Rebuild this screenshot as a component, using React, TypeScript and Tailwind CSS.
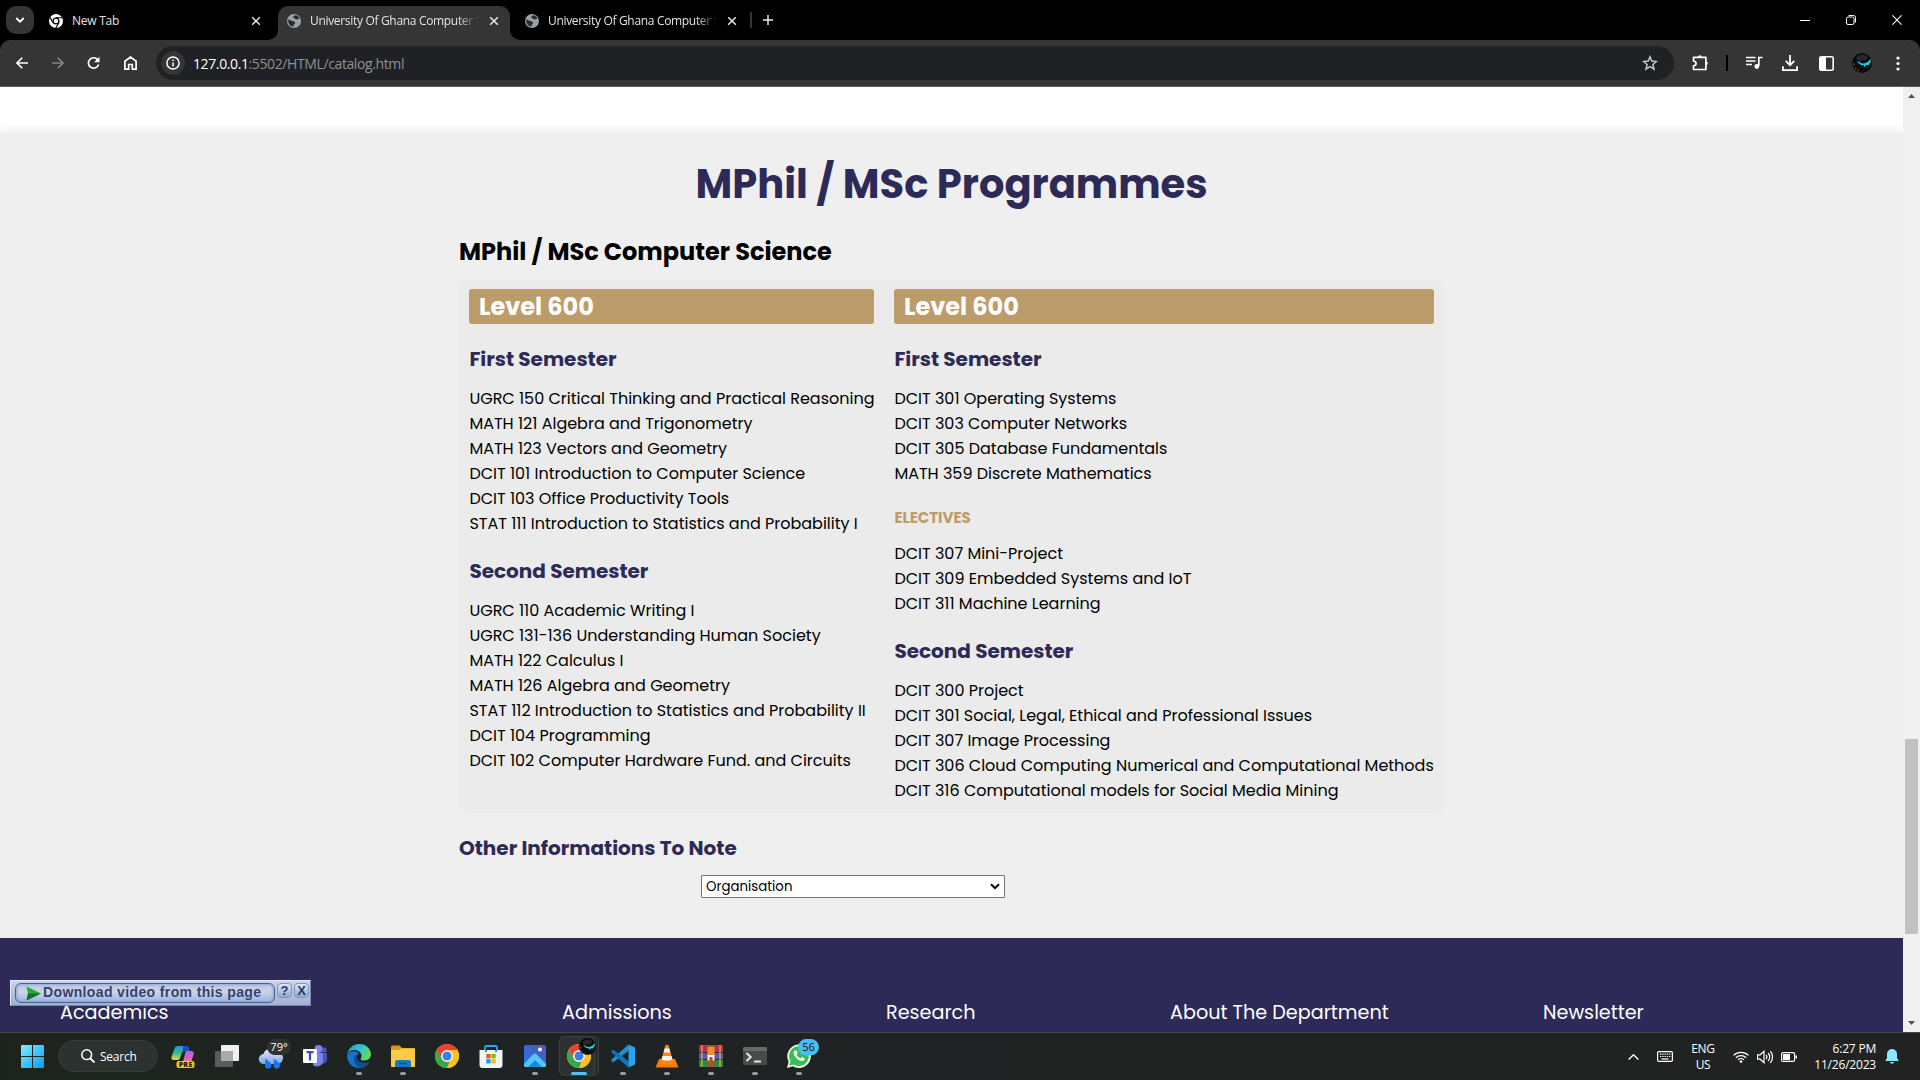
import type { ReactNode } from 'react';

type Block = { kind: 'semester' | 'electives'; title: string; courses: string[] };

const LEFT: Block[] = [
  {
    kind: 'semester',
    title: 'First Semester',
    courses: [
      'UGRC 150 Critical Thinking and Practical Reasoning',
      'MATH 121 Algebra and Trigonometry',
      'MATH 123 Vectors and Geometry',
      'DCIT 101 Introduction to Computer Science',
      'DCIT 103 Office Productivity Tools',
      'STAT 111 Introduction to Statistics and Probability I',
    ],
  },
  {
    kind: 'semester',
    title: 'Second Semester',
    courses: [
      'UGRC 110 Academic Writing I',
      'UGRC 131-136 Understanding Human Society',
      'MATH 122 Calculus I',
      'MATH 126 Algebra and Geometry',
      'STAT 112 Introduction to Statistics and Probability II',
      'DCIT 104 Programming',
      'DCIT 102 Computer Hardware Fund. and Circuits',
    ],
  },
];

const RIGHT: Block[] = [
  {
    kind: 'semester',
    title: 'First Semester',
    courses: [
      'DCIT 301 Operating Systems',
      'DCIT 303 Computer Networks',
      'DCIT 305 Database Fundamentals',
      'MATH 359 Discrete Mathematics',
    ],
  },
  {
    kind: 'electives',
    title: 'ELECTIVES',
    courses: ['DCIT 307 Mini-Project', 'DCIT 309 Embedded Systems and IoT', 'DCIT 311 Machine Learning'],
  },
  {
    kind: 'semester',
    title: 'Second Semester',
    courses: [
      'DCIT 300 Project',
      'DCIT 301 Social, Legal, Ethical and Professional Issues',
      'DCIT 307 Image Processing',
      'DCIT 306 Cloud Computing Numerical and Computational Methods',
      'DCIT 316 Computational models for Social Media Mining',
    ],
  },
];

function Globe() {
  return (
    <svg className="size-3.5 shrink-0" viewBox="0 0 14 14">
      <circle cx="7" cy="7" r="7" fill="#9aa0a6" />
      <path
        d="M1.2 5.6c1.900.1 2.800 1.500 4.300 1.500 1.300 0 1.500 1 2.600 1.200.4 1.300-1 1.600-1.300 2.600-.2.900-.2 1.400-.6 1.800C2.800 12.300.9 9.300 1.200 5.600zM8.200 1.300c-.6.800-2.200.8-2 1.900.2 1 1.400.7 1.900 1.500.5.900 2.300.9 3 .3.600-.5 1.100-.4 1.500-.2C11.900 2.900 10.200 1.500 8.200 1.300z"
        fill="#2b2c2e"
      />
    </svg>
  );
}

function CloseX() {
  return (
    <svg className="ml-auto size-2.5" viewBox="0 0 10 10" fill="none" stroke="#e8eaed" strokeWidth="1.500">
      <path d="M1.200 1.200l7.600 7.600M8.800 1.200L1.200 8.800" />
    </svg>
  );
}

function PageTitle() {
  return (
    <span className="ml-[9px] w-[171px] whitespace-nowrap [mask-image:linear-gradient(to_right,black_148px,transparent_169px)]">
      University Of Ghana Computer S
    </span>
  );
}

function TabStrip() {
  return (
    <div className="flex h-10 shrink-0 items-center bg-black font-['Open_Sans','Noto_Sans',sans-serif] text-[12px] tracking-[-0.32px] text-[#e3e3e3]">
      <div className="ml-1.5 flex size-7 items-center justify-center rounded-[10px] bg-[#353535]">
        <svg className="h-1.5 w-2.5" viewBox="0 0 10 6" fill="none" stroke="#fff" strokeWidth="1.800">
          <path d="M1.200 1l3.800 3.700L8.800 1" />
        </svg>
      </div>
      <div className="ml-[15px] flex w-[212px] items-center pt-px">
        <svg className="size-3.5" viewBox="0 0 14 14">
          <circle cx="7" cy="7" r="7" fill="#fff" />
          <circle cx="7" cy="7" r="2.900" fill="#fff" stroke="#000" strokeWidth="1.200" />
          <path d="M7 3.700h6.300M4.100 8.700L1 3.400M9.900 8.700L6.800 14" stroke="#000" strokeWidth="1.100" />
        </svg>
        <span className="ml-[9px] tracking-[-0.25px]">New Tab</span>
        <CloseX />
      </div>
      <div className="relative ml-[17px] mt-1.5 flex h-[34px] w-[232px] items-center rounded-t-[10px] bg-[#353535] pr-[11px] pb-[5px] pl-[9px]">
        <svg className="absolute bottom-0 -left-2.5 size-2.5" viewBox="0 0 10 10" fill="#353535">
          <path d="M10 0v10H0A10 10 0 0 0 10 0z" />
        </svg>
        <svg className="absolute -right-2.5 bottom-0 size-2.5" viewBox="0 0 10 10" fill="#353535">
          <path d="M0 0v10h10A10 10 0 0 1 0 0z" />
        </svg>
        <Globe />
        <PageTitle />
        <CloseX />
      </div>
      <div className="ml-[15px] flex w-[212px] items-center pt-px">
        <Globe />
        <PageTitle />
        <CloseX />
      </div>
      <div className="ml-[13px] h-4 w-0.5 bg-[#353535]" />
      <svg className="ml-[11px] size-2.5" viewBox="0 0 10 10" stroke="#e8eaed" strokeWidth="1.500">
        <path d="M5 0v10M0 5h10" />
      </svg>
      <div className="mr-[18px] ml-auto flex items-center gap-9">
        <div className="h-px w-[10px] bg-white" />
        <svg className="size-[10px] overflow-visible" viewBox="0 0 10 10" fill="none" stroke="#fff" strokeWidth="1">
          <rect x=".5" y="2" width="7.500" height="7.500" rx="1.500" />
          <path d="M2.500.5h5a2 2 0 0 1 2 2v5" />
        </svg>
        <svg className="size-[10px]" viewBox="0 0 11 11" stroke="#fff" strokeWidth="1.200">
          <path d="M.5.5l10 10M10.500.5l-10 10" />
        </svg>
      </div>
    </div>
  );
}

function Avatar({ className }: { className: string }) {
  return (
    <svg className={className} viewBox="0 0 20 20">
      <circle cx="10" cy="10" r="10" fill="#080c0e" />
      <path d="M4 5c3-4 9-4 12-1l-2 3-8 1z" fill="#23292d" />
      <path
        d="M4.500 8.500l2.500.3c1.500 1.500 3.500 2 5.500 1.500 2.500-.6 4.500-2 6-4.500.5 2 .2 4-1.300 5.200l-.5 1.500-1.500-.8-1.600.8-.6 2-1.300-2.200c-2 .1-4-.6-5-2z"
        fill="#11d6de"
      />
      <path d="M1 10l2 1-1 2z" fill="#c8402e" />
      <path d="M3 15l1.500 1M6 17l1 1" stroke="#b8862e" strokeWidth=".8" />
    </svg>
  );
}

function Toolbar() {
  return (
    <div className="bg-black">
      <div className="flex h-[47px] shrink-0 items-center rounded-t-[10px] border-b border-[#5c5c5c] bg-[#353535] text-white">
        <div className="ml-4 flex items-center gap-6">
          <svg className="h-3 w-3" viewBox="0 0 12 12" fill="none" stroke="#fff" strokeWidth="1.600">
            <path d="M12 6H1.200M6.300.7L1 6l5.300 5.300" />
          </svg>
          <svg className="h-3 w-3" viewBox="0 0 12 12" fill="none" stroke="#858585" strokeWidth="1.600">
            <path d="M0 6h10.800M5.700.7L11 6l-5.300 5.300" />
          </svg>
          <svg className="-ml-px h-3.5 w-[13px]" viewBox="0 0 13 14" fill="none" stroke="#fff" strokeWidth="1.700">
            <path d="M11.600 8.500A5.200 5.200 0 1 1 10.600 3.600" />
            <path d="M12.500 .8v5.400H7.100z" fill="#fff" stroke="none" />
          </svg>
          <svg className="h-3.5 w-[13px]" viewBox="0 0 13 14" fill="none" stroke="#fff" strokeWidth="1.700">
            <path d="M.9 13.100V5.200L6.500 1l5.600 4.200v7.900H8.300V8.500H4.700v4.600z" />
          </svg>
        </div>
        <div className="ml-[19px] flex h-[34px] w-[1518px] items-center rounded-full bg-[#202124] pr-4 pl-[5px]">
          <div className="flex size-6 items-center justify-center rounded-full bg-[#353535]">
            <svg className="size-3.5" viewBox="0 0 14 14" fill="none" stroke="#fff" strokeWidth="1.500">
              <circle cx="7" cy="7" r="6.100" />
              <path d="M7 6.400v4M7 3.600v1.500" />
            </svg>
          </div>
          <span className="ml-2 font-['Open_Sans','Noto_Sans',sans-serif] text-[14px] tracking-[-0.39px] text-[#8d9094]">
            <span className="text-white">127.0.0.1</span>:5502/HTML/catalog.html
          </span>
          <svg className="ml-auto size-4" viewBox="0 0 16 16" fill="none" stroke="#c7c7c7" strokeWidth="1.500">
            <path d="M8 1.800l1.800 4.300 4.600.4-3.500 3 1.100 4.600L8 11.600l-4 2.500 1.100-4.600-3.500-3 4.600-.4z" />
          </svg>
        </div>
        <svg className="-mt-px ml-[18px] size-[17px]" viewBox="0 0 17 17" fill="none" stroke="#fff" strokeWidth="1.700">
          <path d="M1.500 3.300h12.400v12.200H1.500v-3.600c3.400-.6 3.400-4.200 0-4.900z" strokeLinejoin="round" />
          <path d="M6 3a1.800 1.800 0 0 1 3.600 0zM14 7.500a1.800 1.800 0 0 1 0 3.600z" fill="#fff" stroke="none" />
        </svg>
        <div className="ml-[17px] h-4 w-0.5 bg-black" />
        <svg className="ml-[18px] h-[14px] w-[17px]" viewBox="0 0 17 14" fill="none" stroke="#fff" strokeWidth="1.700">
          <path d="M0 1.500h9.500M0 5h9.500M0 8.500h6M16.500 1.500h-3.700v8.500" />
          <circle cx="10.800" cy="10.500" r="2.400" fill="#fff" stroke="none" />
        </svg>
        <svg className="ml-[19px] size-4" viewBox="0 0 16 16" fill="none" stroke="#fff" strokeWidth="1.800">
          <path d="M8 0v10M3.700 5.900L8 10.200l4.300-4.300M.9 11.200v3.900h14.200v-3.900" />
        </svg>
        <svg className="ml-[21px] h-[15px] w-[15px]" viewBox="0 0 15 15">
          <rect x=".8" y=".8" width="13.400" height="13.400" rx="1.500" fill="none" stroke="#fff" strokeWidth="1.600" />
          <path d="M1 1h6v13H1z" fill="#fff" />
        </svg>
        <Avatar className="ml-[18px] size-5" />
        <svg className="ml-[24px] h-[15px] w-1" viewBox="0 0 4 15" fill="#fff">
          <circle cx="2" cy="2" r="1.600" />
          <circle cx="2" cy="7.500" r="1.600" />
          <circle cx="2" cy="13" r="1.600" />
        </svg>
      </div>
    </div>
  );
}

function Level({ blocks }: { blocks: Block[] }) {
  return (
    <div className="whitespace-nowrap">
      <div className="h-[35px] rounded-[3px] bg-[#bc9c6a] px-2.5 text-2xl leading-[36px] font-bold text-white">
        Level 600
      </div>
      {blocks.map((b) => (
        <div key={b.title} className="pl-[0.4px]">
          {b.kind === 'semester' ? (
            <h3 className="mt-5 mb-3 text-xl leading-[30px] font-bold text-[#2d2a57]">{b.title}</h3>
          ) : (
            <h4 className="mt-[21px] mb-3 text-[15px] leading-[22px] font-bold text-[#bc9c6a]">{b.title}</h4>
          )}
          <ul className="text-base leading-[25px] font-normal text-black">
            {b.courses.map((c) => (
              <li key={c}>{c}</li>
            ))}
          </ul>
        </div>
      ))}
    </div>
  );
}

function DownloadBar() {
  return (
    <div className="absolute top-[893px] left-2.5 flex h-[26px] w-[301px] items-start border border-t-[#e4ebf7] border-r-[#6f86ad] border-b-[#6f86ad] border-l-[#e4ebf7] bg-linear-to-b from-[#c9d4ec] to-[#a3b0d0] pt-0.5 pl-1">
      <div className="flex h-5 w-[260px] items-center rounded-[6px] border border-[#4a5f94] bg-linear-to-b from-[#c3cbe2] via-[#cdd3e4] via-45% to-[#9db4e2] pl-2.5 shadow-[inset_0_0_3px_1px_#8fa6d6]">
        <svg className="h-[15px] w-[15px] shrink-0" viewBox="0 0 15 15">
          <path d="M.5.5L15 7.500.5 14.500l1.500-7z" fill="#18b52c" />
          <path d="M2 7.500h13L.5 14.500z" fill="#1c6b34" />
        </svg>
        <span className="ml-0.5 pb-0.5 font-['Liberation_Sans',Arial,sans-serif] text-[14px] font-bold tracking-[0.37px] whitespace-nowrap text-[#2e4374]">
          Download video from this page
        </span>
      </div>
      {['?', 'X'].map((t) => (
        <div
          key={t}
          className="ml-0.5 flex size-[15px] items-center justify-center rounded-[4px] border border-[#8395bd] bg-linear-to-b from-[#dde5f3] to-[#93a7d0] font-['Liberation_Sans',Arial,sans-serif] text-[13px] leading-none font-bold text-[#22386b]"
        >
          {t}
        </div>
      ))}
    </div>
  );
}

function PageView() {
  return (
    <div className="relative flex h-[945px] shrink-0 overflow-hidden bg-white font-['Poppins','Inter',sans-serif]">
      <div className="flex w-[1903px] flex-col pt-[45px]">
        <section className="flex h-[806px] shrink-0 flex-col items-center bg-[#efefef] pt-[22px] shadow-[0_0_10px_rgba(0,0,0,0.1)]">
          <h1 className="text-[40px] leading-[60px] font-bold text-[#2d2a57]">MPhil / MSc Programmes</h1>
          <div className="mt-5 w-[985px]">
            <h2 className="text-2xl leading-9 font-bold text-black">MPhil / MSc Computer Science</h2>
            <div className="mt-[9px] flex h-[534px] gap-5 rounded-[10px] bg-[#ebebeb] p-2.5">
              <div className="w-[405px]">
                <Level blocks={LEFT} />
              </div>
              <div className="w-[540px]">
                <Level blocks={RIGHT} />
              </div>
            </div>
            <h3 className="mt-5 text-xl leading-[30px] font-bold text-[#2d2a57]">Other Informations To Note</h3>
            <div className="mt-3 ml-[242px] flex h-[23px] w-[304px] items-center justify-between rounded-[1px] border border-[#767676] bg-white pr-1 pl-1 text-[13.33px] leading-5 text-black">
              <span>Organisation</span>
              <svg className="h-[7px] w-2.5" viewBox="0 0 10 7" fill="none" stroke="#000" strokeWidth="2">
                <path d="M1 1.200l4 4 4-4" />
              </svg>
            </div>
          </div>
        </section>
        <footer className="flex h-[94px] shrink-0 bg-[#2d2a57] pt-[60px] pl-[60px] text-[19.2px] leading-[29px] whitespace-nowrap text-white">
          <div className="w-[502px]">Academics</div>
          <div className="w-[324px]">Admissions</div>
          <div className="w-[284px]">Research</div>
          <div className="w-[373px]">About The Department</div>
          <div>Newsletter</div>
        </footer>
      </div>
      <div className="flex w-[17px] flex-col items-center bg-[#f0f0f0] py-[7px]">
        <svg className="h-1 w-[7px]" viewBox="0 0 7 4" fill="#505050">
          <path d="M3.500 0L7 4H0z" />
        </svg>
        <div className="mt-[641px] h-[195px] w-[13px] bg-[#c1c1c1]" />
        <svg className="mt-auto h-1 w-[7px]" viewBox="0 0 7 4" fill="#505050">
          <path d="M3.500 4L7 0H0z" />
        </svg>
      </div>
      <DownloadBar />
    </div>
  );
}

function ChromeLogo() {
  return (
    <>
      <circle cx="12" cy="12" r="12" fill="#fcc31e" />
      <path d="M1.600 6A12 12 0 0 1 22.400 6H12a6 6 0 0 0-5.200 9z" fill="#ea4335" />
      <path d="M1.600 6l5.200 9A6 6 0 0 0 12 18l2.500-.4L12 24A12 12 0 0 1 1.600 6z" fill="#34a853" />
      <path d="M22.400 6H12a6 6 0 0 1 5.200 9L12 24A12 12 0 0 0 22.400 6z" fill="#fcc31e" />
      <circle cx="12" cy="12" r="5.800" fill="#fff" />
      <circle cx="12" cy="12" r="4.500" fill="#3b7ded" />
    </>
  );
}

function TaskIcon({ children, open }: { children: ReactNode; open?: boolean }) {
  return (
    <div className="flex w-11 flex-col items-center pt-[11px]">
      <svg className="size-6 overflow-visible" viewBox="0 0 24 24">
        {children}
      </svg>
      {open && <div className="mt-[4px] h-[3px] w-1.5 rounded-full bg-[#9a9a9a]" />}
    </div>
  );
}

function Taskbar() {
  return (
    <div className="flex h-12 shrink-0 border-t border-[#444744] bg-linear-to-r from-[#1d241d] via-[#1f2323] via-20% to-[#222222] font-['Open_Sans','Noto_Sans',sans-serif] text-[12px] text-white">
      <svg className="mt-3 ml-[21px] size-[23px]" viewBox="0 0 23 23">
        <defs>
          <linearGradient id="win" x1="0" y1="0" x2="1" y2="1">
            <stop offset="0" stopColor="#7defff" />
            <stop offset="1" stopColor="#0a9af5" />
          </linearGradient>
        </defs>
        <path
          d="M0 1a1 1 0 0 1 1-1h10v11H0zM12 0h10a1 1 0 0 1 1 1v10H12zM0 12h11v11H1a1 1 0 0 1-1-1zM12 12h11v10a1 1 0 0 1-1 1H12z"
          fill="url(#win)"
        />
      </svg>
      <div className="mt-[7px] ml-3.5 flex h-8 w-[100px] items-center rounded-full border border-[#343b38] bg-[#2b322f] pl-[22px] tracking-[-0.25px]">
        <svg className="size-3.5" viewBox="0 0 14 14" fill="none" stroke="#fff" strokeWidth="1.500">
          <circle cx="5.700" cy="5.700" r="4.900" />
          <path d="M9.300 9.300l4.200 4.200" strokeWidth="1.900" />
        </svg>
        <span className="ml-[5px] pt-px">Search</span>
      </div>
      <div className="ml-[3px] flex">
        <TaskIcon>
          <defs>
            <linearGradient id="cpa" x1="0" y1="0" x2="0" y2="1">
              <stop offset="0" stopColor="#2492e8" />
              <stop offset=".5" stopColor="#35b98e" />
              <stop offset="1" stopColor="#e7d83b" />
            </linearGradient>
            <linearGradient id="cpb" x1="0" y1="0" x2="0" y2="1">
              <stop offset="0" stopColor="#9b6bf2" />
              <stop offset=".5" stopColor="#e35bb0" />
              <stop offset="1" stopColor="#f2935c" />
            </linearGradient>
          </defs>
          <path
            d="M7 2h8c2 0 2.500 1 3 3l.6 2H14c-2 0-3 1-3.500 3L9 14c-.5 1.500-1.500 2-3 2H3c-2.500 0-3-1.500-2.400-3.500L3.500 4.500C4 3 5 2 7 2z"
            fill="url(#cpa)"
          />
          <path d="M12 2h3c2 0 2.500 1 3 3l.6 2H14c-1 0-2 .5-2.500 1.500z" fill="#1b4fc0" />
          <path
            d="M15 7h5c2.500 0 3.300 1.500 2.600 3.700L20.500 17c-.6 2-1.500 3-3.500 3H9c2 0 2.700-1.500 3.200-3L14 10c.4-1.500.6-3 1-3z"
            fill="url(#cpb)"
          />
          <rect x="5.500" y="17" width="18" height="7" rx="2" fill="#fbc50a" />
          <text x="14.600" y="23" fontSize="7" fontWeight="800" textAnchor="middle" fill="#1c1c1c" letterSpacing=".3">
            PRE
          </text>
        </TaskIcon>
        <TaskIcon>
          <rect x="6" y="1" width="18" height="16" rx="1" fill="#f1f1f1" />
          <rect x="0" y="7" width="18" height="16" rx="1" fill="#5b5d5d" />
          <path d="M6 7h12v10H6z" fill="#aaabab" />
        </TaskIcon>
        <TaskIcon>
          <defs>
            <linearGradient id="cl" x1="0" y1="0" x2="0" y2="1">
              <stop offset="0" stopColor="#e6edf8" />
              <stop offset="1" stopColor="#7fa4e6" />
            </linearGradient>
          </defs>
          <path d="M5 20a5 5 0 0 1-.5-10A7 7 0 0 1 17 8a6 6 0 0 1 2 12z" fill="url(#cl)" />
          <path d="M6.500 14.500l5 4.500a3.300 3.300 0 1 1-5.500 2zM15 14.500l5 4.500a3.300 3.300 0 1 1-5.500 2z" fill="#1478f2" />
          <rect x="8" y="-5" width="24" height="16" rx="8" fill="#303230" />
          <text x="20" y="7" fontSize="11" textAnchor="middle" fill="#fff">
            79°
          </text>
        </TaskIcon>
        <TaskIcon>
          <circle cx="21" cy="6" r="2.700" fill="#4b53bc" />
          <circle cx="15.500" cy="5" r="4" fill="#7b83eb" />
          <path d="M17 9h7v6.500a4 4 0 0 1-6 3.400z" fill="#4b53bc" />
          <path d="M10 9h10v8a6 6 0 0 1-10 4z" fill="#7b83eb" />
          <rect x="0" y="5" width="14" height="14" rx="1" fill="#fff" />
          <path d="M3.500 8.200h7M7 8v8.500" stroke="#4049b8" strokeWidth="2.200" />
        </TaskIcon>
        <TaskIcon open>
          <defs>
            <linearGradient id="eg" x1="0" y1="0" x2="1" y2=".4">
              <stop offset="0" stopColor="#249fdd" />
              <stop offset=".6" stopColor="#34c2cf" />
              <stop offset="1" stopColor="#62d95a" />
            </linearGradient>
          </defs>
          <path
            d="M.2 10.500C3 6.500 9 6.200 12 9.500c-1.800 1.200-2.800 3-2.200 5 .8 3.600 5.700 5.500 12 4C19 23 15.500 24 12 24A12 12 0 0 1 .2 10.500z"
            fill="#1574c8"
          />
          <path
            d="M.2 10.500C1.500 4 6.500 0 12 0c7 0 12 5 12 10.300 0 3.800-3 6.200-6.700 6.200-2.800 0-4.300-1.200-3.300-2.600C16 10.500 12.500 6 7.500 6 3.800 6 1 8 .2 10.500z"
            fill="url(#eg)"
          />
          <path
            d="M8.800 10.500c-3.600 4.500-1.500 11.800 4.700 13.400 3.800-.2 7-2.300 8.500-5.400-5 1.800-10.800.3-12-3.800-.4-1.500-.2-2.800.5-3.900z"
            fill="#0d4f97"
          />
        </TaskIcon>
        <TaskIcon open>
          <path d="M0 3a1.500 1.500 0 0 1 1.500-1.500h7L11 4h11.500A1.500 1.500 0 0 1 24 5.500V8H0z" fill="#dd9a0c" />
          <path d="M0 6h8.500l2-1.500H24V22a1 1 0 0 1-1 1H1a1 1 0 0 1-1-1z" fill="#fccb45" />
          <path d="M4 23v-4.500A2.500 2.500 0 0 1 6.500 16h11a2.500 2.500 0 0 1 2.500 2.500V23z" fill="#1478c6" />
          <path d="M8 19.500h8" stroke="#0a5596" strokeWidth="1.500" />
        </TaskIcon>
        <TaskIcon>
          <ChromeLogo />
        </TaskIcon>
        <TaskIcon>
          <path
            d="M6 7V3.500A1.500 1.500 0 0 1 7.500 2h9A1.500 1.500 0 0 1 18 3.500V7"
            fill="none"
            stroke="#28a8ea"
            strokeWidth="1.800"
          />
          <path d="M.5 6h23v15a3 3 0 0 1-3 3h-17a3 3 0 0 1-3-3z" fill="#f1f3f5" />
          <path d="M6 6h1.800v2H6zM16.200 6H18v2h-1.800z" fill="#1c86c8" />
          <path d="M7.300 10h4.300v4.300H7.300z" fill="#f25022" />
          <path d="M12.400 10h4.300v4.300h-4.300z" fill="#7fba00" />
          <path d="M7.300 15.100h4.300v4.300H7.300z" fill="#00a4ef" />
          <path d="M12.400 15.100h4.300v4.300h-4.300z" fill="#ffb900" />
        </TaskIcon>
        <TaskIcon open>
          <defs>
            <linearGradient id="ph" x1="0" y1="1" x2="1" y2="0">
              <stop offset="0" stopColor="#1d7fe0" />
              <stop offset="1" stopColor="#5a4fb8" />
            </linearGradient>
          </defs>
          <rect x="1" y="1" width="22" height="22" rx="2" fill="url(#ph)" />
          <path
            d="M1 20l9-9.500c1.200-1.200 2.600-1.200 3.800 0L23 20v1.500a1.500 1.500 0 0 1-1.500 1.500h-19A1.500 1.500 0 0 1 1 21.500z"
            fill="#53c6f7"
          />
          <path d="M5 23l7-7 7 7z" fill="#1e88dd" />
          <circle cx="17" cy="5.500" r="2" fill="#fff" />
        </TaskIcon>
        <div className="relative flex w-11 flex-col items-center pt-[11px]">
          <div className="absolute top-[3px] left-[2px] h-10 w-[40px] rounded-[5px] border border-[#3b3e3e] bg-[#2a2d2d]" />
          <div className="absolute top-[3px] left-[2px] h-10 w-[36px] rounded-[5px] border border-[#3b3e3e] bg-[#2e3131]" />
          <svg className="relative size-6 overflow-visible" viewBox="0 0 24 24">
            <ChromeLogo />
          </svg>
          <Avatar className="absolute top-[5px] left-[22px] size-[17px]" />
          <div className="relative mt-[4px] h-[3px] w-4 rounded-full bg-[#4cc2ff]" />
        </div>
        <TaskIcon open>
          <path d="M17.500.5L0 16l2 2.500L18 6.500z" fill="#1f8fd8" />
          <path d="M17.500 23.500L0 8l2-2.500 16 12z" fill="#0f74bd" />
          <path d="M17.500.5L24 3.500v17l-6.500 3z" fill="#29a3ec" />
        </TaskIcon>
        <TaskIcon open>
          <path d="M4 15h16l3.500 8.500H.5z" fill="#f57c00" />
          <path d="M10.500 1h3L18.500 19c-2 2-11 2-13 0z" fill="#fa8a16" />
          <path d="M9.700 4.500h4.600l1 4H8.700zM7.500 12h9l1 3.500c-3 1.500-8 1.500-11 0z" fill="#f4f4f4" />
        </TaskIcon>
        <TaskIcon open>
          <rect x="0" y="1" width="24" height="7.500" rx="1" fill="#c22a4e" />
          <rect x="0" y="8.500" width="24" height="7" rx="1" fill="#5b57b5" />
          <rect x="0" y="15.500" width="24" height="7.500" rx="1" fill="#2b8a3c" />
          <path d="M0 8.500h24M0 15.500h24" stroke="#24222c" strokeWidth=".8" />
          <path d="M3 1v22M21 1v22" stroke="#e0b640" strokeWidth="1.200" />
          <path d="M8.500 1h7v22h-7z" fill="#a5562a" />
          <path d="M8.500 3h7v9h-7z" fill="#e8962c" />
          <path d="M9.500 16.500v-4.500h5v4.500" fill="none" stroke="#fff" strokeWidth="1.800" />
        </TaskIcon>
        <TaskIcon open>
          <rect x="0" y="3" width="24" height="18" rx="1.500" fill="#4a4a4a" />
          <path d="M0 4.500A1.500 1.500 0 0 1 1.500 3h21A1.500 1.500 0 0 1 24 4.500V7H0z" fill="#6a6a6a" />
          <path d="M3.500 9l4.200 4-4.200 4M11 17.500h7" fill="none" stroke="#e6e6e6" strokeWidth="2" />
        </TaskIcon>
        <TaskIcon open>
          <path d="M0 24l1.700-6.200A11.800 11.800 0 1 1 6 22.300z" fill="#f3f6f3" />
          <path d="M2.200 21.800l1.300-4.600A9.900 9.900 0 1 1 6.800 20.500z" fill="#35c051" />
          <path
            d="M8 6.500c-1.500 1-2 3 0 5.800 2.200 3.200 5.400 5 7.600 4.600 1.600-.3 2.200-1.500 2-2.700l-2.600-1.300-1.400 1.500c-1.800-.6-3.400-2.200-4-3.700l1.100-1.400L9.500 6.400z"
            fill="#fff"
          />
          <rect x="11" y="-5" width="21" height="16.500" rx="8.200" fill="#4cbcf5" />
          <text x="21.500" y="7.300" fontSize="11" textAnchor="middle" fill="#111">
            56
          </text>
        </TaskIcon>
      </div>
      <div className="ml-auto flex items-center">
        <svg className="h-1.5 w-[11px]" viewBox="0 0 11 6" fill="none" stroke="#fff" strokeWidth="1.400">
          <path d="M.6 5.500L5.500.8l4.900 4.700" />
        </svg>
        <svg className="ml-[18px] h-[11px] w-4" viewBox="0 0 16 11" fill="none" stroke="#fff" strokeWidth="1.200">
          <rect x=".6" y=".6" width="14.800" height="9.800" rx="1.200" />
          <path d="M3 3.200h10.500M3 5.500h10.500" strokeDasharray="1.300 1" />
          <path d="M4.500 8h7" />
        </svg>
        <div className="ml-[18px] w-6 text-center leading-4 tracking-[-0.3px]">
          ENG
          <br />
          US
        </div>
        <svg className="ml-[18px] h-3 w-4" viewBox="0 0 16 12" fill="none" stroke="#fff" strokeWidth="1.200">
          <path d="M.5 4.400a10.600 10.600 0 0 1 15 0M2.800 6.700a7.400 7.400 0 0 1 10.400 0M5 8.900a4.300 4.300 0 0 1 6 0" />
          <circle cx="8" cy="10.600" r="1.300" fill="#fff" stroke="none" />
        </svg>
        <svg className="ml-[8px] h-[14px] w-4" viewBox="0 0 16 14" fill="none" stroke="#fff" strokeWidth="1.200">
          <path d="M.6 4.800h2.600L7 1.300v11.400L3.200 9.200H.6zM9 4.800c1 1.200 1 3.200 0 4.400M11.200 3c2 2.200 2 5.800 0 8M13.300 1.200c3 3.200 3 8.400 0 11.600" />
        </svg>
        <svg className="ml-[8px] h-2.5 w-4" viewBox="0 0 16 10" fill="none" stroke="#fff" strokeWidth="1.200">
          <rect x=".6" y=".6" width="13" height="8.800" rx="1.500" />
          <path d="M2 2h7v6H2z" fill="#fff" stroke="none" />
          <path d="M15.200 3.500v3" strokeWidth="1.500" />
        </svg>
        <div className="ml-[15px] w-[64px] text-right leading-4 tracking-[-0.2px] whitespace-nowrap">
          6:27 PM
          <br />
          11/26/2023
        </div>
        <svg className="mr-[21px] ml-[9px] h-[15px] w-[14px]" viewBox="0 0 14 15" fill="#8ee8fd">
          <path d="M7 0a5 5 0 0 1 5 5v4l1.800 3H.2L2 9V5a5 5 0 0 1 5-5zM4.800 13h4.400a2.300 2.300 0 0 1-4.400 0z" />
        </svg>
      </div>
    </div>
  );
}

export default function App() {
  return (
    <div className="flex h-[1080px] w-[1920px] flex-col overflow-hidden bg-white">
      <TabStrip />
      <Toolbar />
      <PageView />
      <Taskbar />
    </div>
  );
}
